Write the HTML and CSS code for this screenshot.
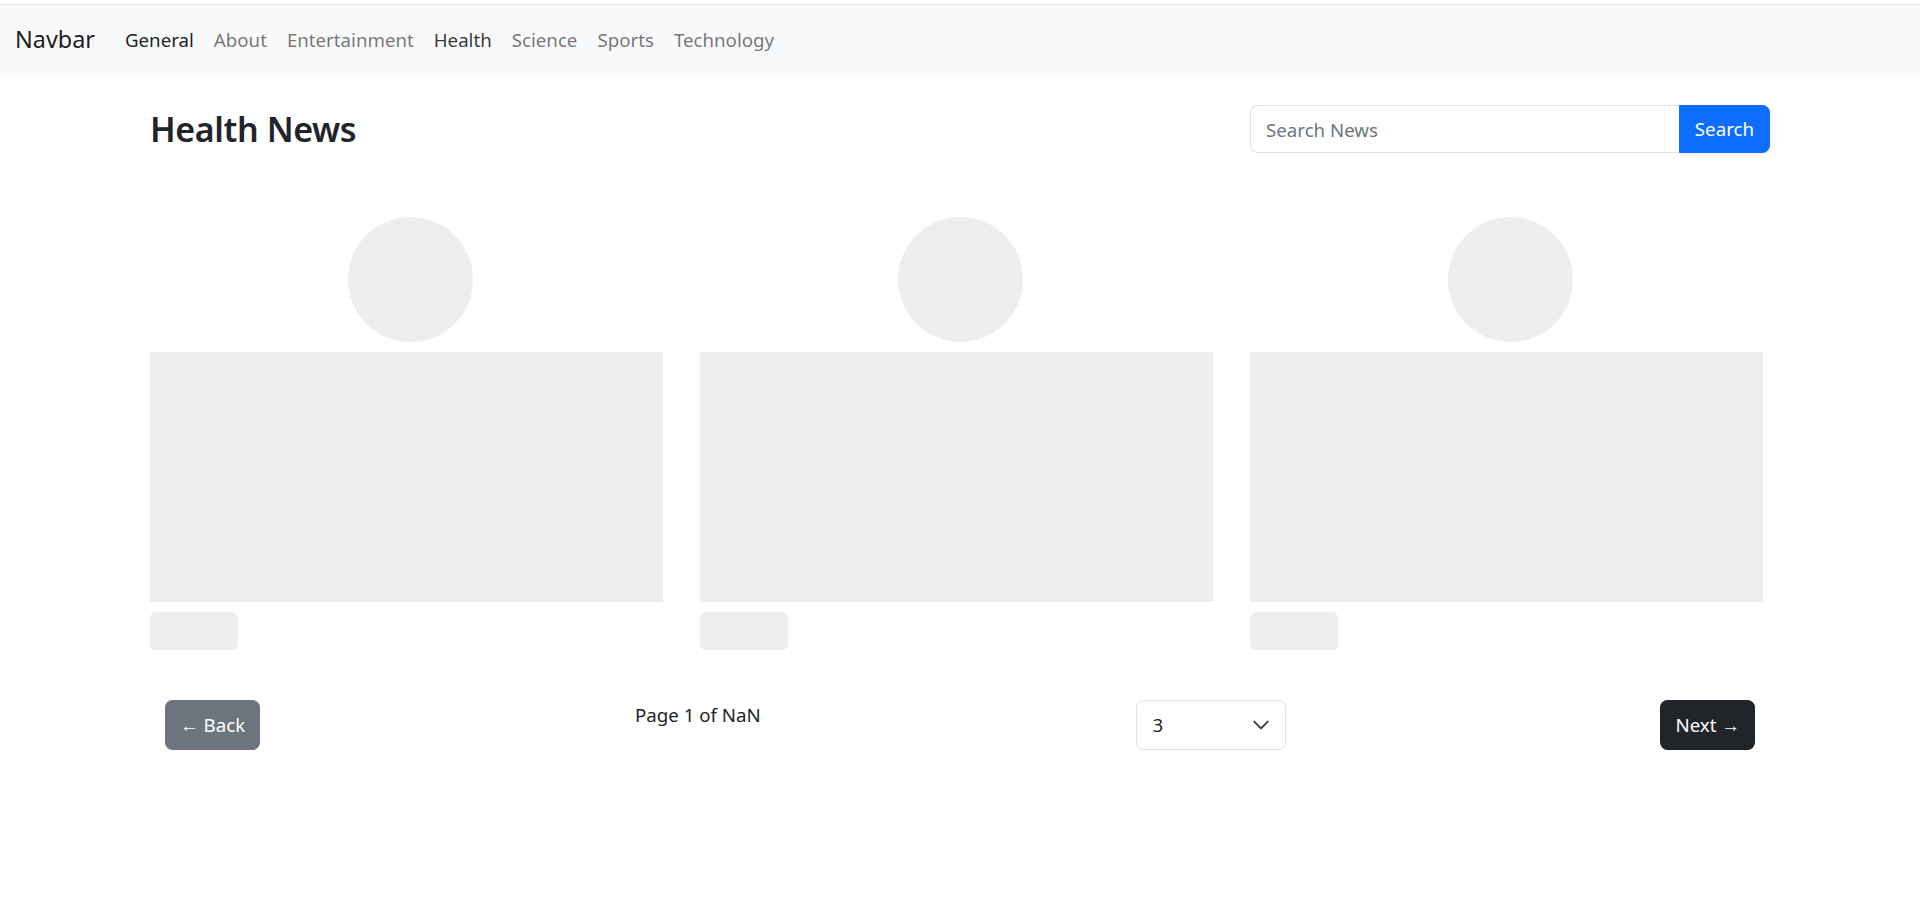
FILE: index.html
```html
<!DOCTYPE html>
<html lang="en">
<head>
<meta charset="utf-8">
<title>NewsMonkey</title>
<link rel="stylesheet" href="styles.css">
</head>
<body>
<nav class="navbar">
  <a class="brand" href="#">Navbar</a>
  <ul class="nav-list">
    <li><a class="nav-link active" href="#">General</a></li>
    <li><a class="nav-link" href="#">About</a></li>
    <li><a class="nav-link" href="#">Entertainment</a></li>
    <li><a class="nav-link active2" href="#">Health</a></li>
    <li><a class="nav-link" href="#">Science</a></li>
    <li><a class="nav-link" href="#">Sports</a></li>
    <li><a class="nav-link" href="#">Technology</a></li>
  </ul>
</nav>
<main class="container">
  <div class="header-row">
    <h2 class="title">Health News</h2>
    <form class="search">
      <input class="search-input" type="text" placeholder="Search News">
      <button class="search-btn" type="button">Search</button>
    </form>
  </div>
  <div class="cards">
    <div class="card">
      <div class="sk-circle"></div>
      <div class="sk-rect"></div>
      <div class="sk-pill"></div>
    </div>
    <div class="card">
      <div class="sk-circle"></div>
      <div class="sk-rect"></div>
      <div class="sk-pill"></div>
    </div>
    <div class="card">
      <div class="sk-circle"></div>
      <div class="sk-rect"></div>
      <div class="sk-pill"></div>
    </div>
  </div>
  <div class="pager">
    <button class="btn btn-back" type="button">&larr; Back</button>
    <p class="page-info">Page 1 of NaN</p>
    <div class="select">
      <span class="select-value">3</span>
      <svg class="chevron" viewBox="0 0 16 16" width="18" height="18"><path d="m2 5 6 6 6-6" fill="none" stroke="#343a40" stroke-width="1.7" stroke-linecap="round" stroke-linejoin="round"/></svg>
    </div>
    <button class="btn btn-next" type="button">Next &rarr;</button>
  </div>
</main>
</body>
</html>
```
FILE: styles.css
```css
* { box-sizing: border-box; }
html, body { margin: 0; padding: 0; }
body {
  padding-top: 4px;
  font-family: "Noto Sans", "Open Sans", sans-serif;
  font-size: 18.7px;
  line-height: 30px;
  color: #212529;
  background: #fff;
}
.navbar {
  display: flex;
  align-items: center;
  height: 71px;
  padding: 0 15px;
  background: #f8f9fa;
  border-top: 1px solid #e3e3e3;
}
.brand {
  font-size: 23.4px;
  line-height: 37.5px;
  color: rgba(0,0,0,.9);
  text-decoration: none;
  margin-right: 20px;
}
.nav-list {
  display: flex;
  list-style: none;
  margin: 0;
  padding: 0;
}
.nav-link {
  display: block;
  padding: 10px 10px;
  color: rgba(0,0,0,.55);
  text-decoration: none;
}
.nav-link.active { color: rgba(0,0,0,.9); }
.nav-link.active2 { color: rgba(0,0,0,.8); }
.container {
  width: 1650px;
  margin: 0 auto;
  padding: 0 15px;
}
.header-row {
  display: flex;
  justify-content: space-between;
  align-items: center;
  margin-top: 30px;
}
.title {
  margin: 0;
  font-size: 34px;
  font-weight: 600;
  letter-spacing: -0.4px;
  line-height: 48px;
}
.search {
  display: flex;
  width: 520px;
  margin: 0;
}
.search-input {
  flex: 1;
  min-width: 0;
  height: 47.5px;
  padding: 0 15px;
  font: inherit;
  color: #212529;
  border: 1px solid #dee2e6;
  border-right: none;
  border-radius: 7.5px 0 0 7.5px;
  outline: none;
}
.search-input::placeholder { color: #6c757d; }
.search-btn {
  height: 47.5px;
  padding: 0 15px;
  font: inherit;
  color: #fff;
  background: #0d6efd;
  border: 1px solid #0d6efd;
  border-radius: 0 7.5px 7.5px 0;
  white-space: nowrap;
}
.cards {
  display: grid;
  grid-template-columns: repeat(3, 520px);
  column-gap: 30px;
  margin-top: 64px;
}
.card {
  display: flex;
  flex-direction: column;
}
.sk-circle {
  width: 125px;
  height: 125px;
  border-radius: 50%;
  background: #eee;
  align-self: center;
  margin-bottom: 10px;
}
.sk-rect {
  width: 513px;
  height: 250px;
  background: #eee;
  margin-bottom: 10px;
}
.sk-pill {
  width: 88px;
  height: 38px;
  border-radius: 6px;
  background: #eee;
}
.pager {
  display: flex;
  justify-content: space-between;
  align-items: flex-start;
  margin-top: 50px;
  padding: 0 15px;
}
.btn {
  height: 50px;
  padding: 0 15px;
  font: inherit;
  color: #fff;
  border: none;
  border-radius: 7.5px;
  white-space: nowrap;
}
.btn-back { background: #6c757d; }
.btn-next { background: #212529; }
.page-info {
  margin: 0;
  line-height: 30px;
}
.select {
  display: flex;
  align-items: center;
  justify-content: space-between;
  width: 150px;
  height: 50px;
  padding: 0 15px 0 16px;
  border: 1px solid #dee2e6;
  border-radius: 7.5px;
}
.chevron { display: block; }
```
